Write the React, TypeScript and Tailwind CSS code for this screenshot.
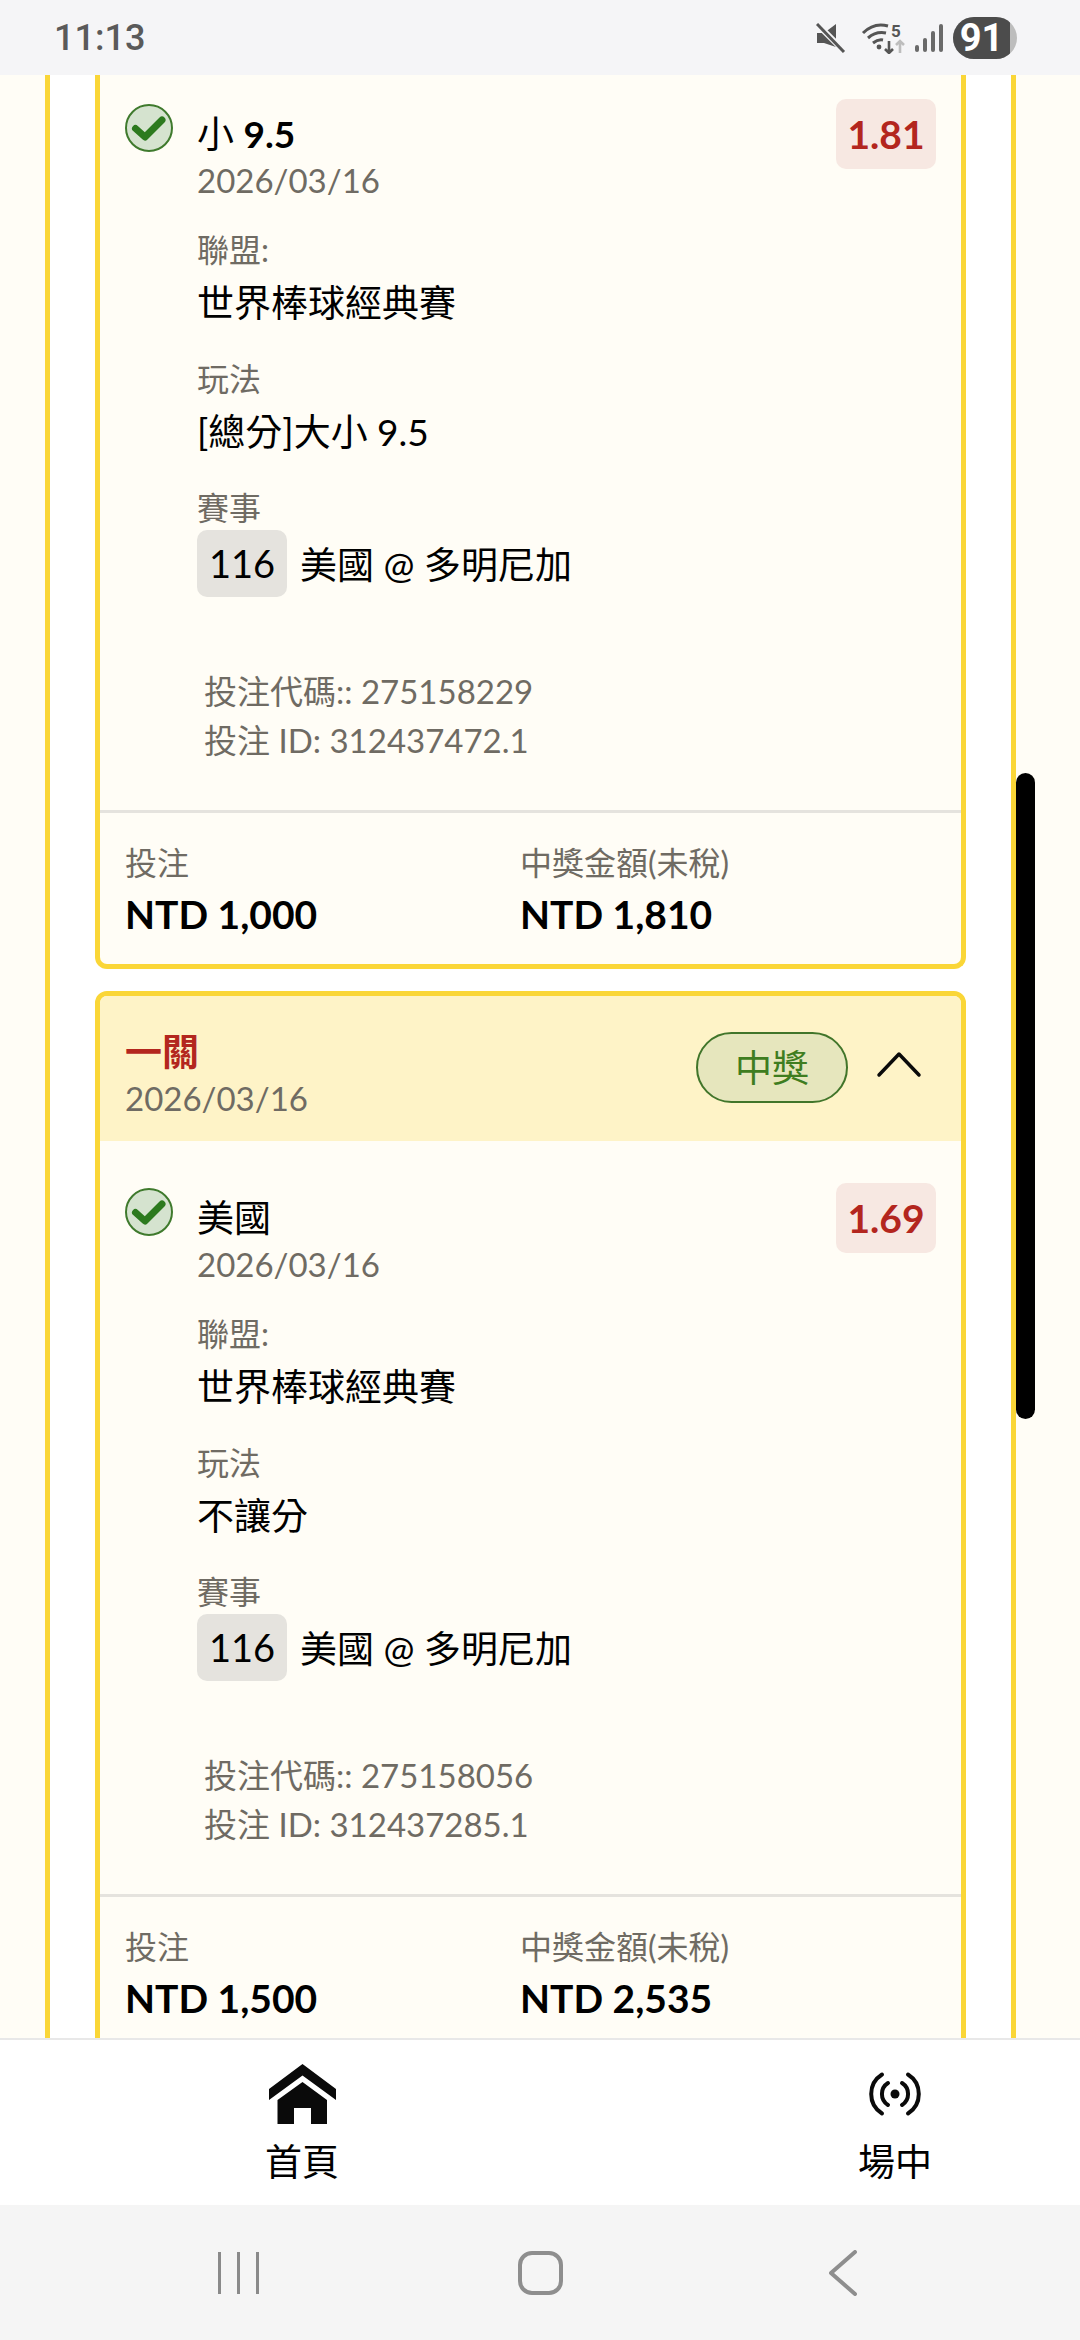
import React from 'react';

type Bet = {
  title: React.ReactNode;
  odds: string;
  market: string;
  code: string;
  betId: string;
  stake: string;
  payout: string;
};

const bets: Bet[] = [
  {
    title: <>小 <b className="font-bold">9.5</b></>,
    odds: '1.81',
    market: '[總分]大小 9.5',
    code: '275158229',
    betId: '312437472.1',
    stake: 'NTD 1,000',
    payout: 'NTD 1,810',
  },
  {
    title: '美國',
    odds: '1.69',
    market: '不讓分',
    code: '275158056',
    betId: '312437285.1',
    stake: 'NTD 1,500',
    payout: 'NTD 2,535',
  },
];

const CheckIcon = () => (
  <svg width="48" height="48" viewBox="0 0 48 48" className="mt-[5px] shrink-0">
    <circle cx="24" cy="24" r="23" fill="#d5e3cf" stroke="#3f7a2d" strokeWidth="2" />
    <path d="M10.5 24.5 L20 33 L37 16" fill="none" stroke="#2c7a1e" strokeWidth="7" strokeLinejoin="round" strokeLinecap="round" />
  </svg>
);

const BetBody = ({ bet }: { bet: Bet }) => (
  <>
    <div className="flex items-start px-[25px] pt-[42px]">
      <CheckIcon />
      <div className="ml-[24px] flex-1 pt-[11px]">
        <div className="text-[37px] leading-[48px] text-black">{bet.title}</div>
        <div className="text-[33px] leading-[44px] text-[#6f6b63]">2026/03/16</div>

        <div className="mt-[26px] text-[32px] leading-[44px] text-[#6f6b63]">聯盟:</div>
        <div className="mt-[7px] text-[37px] leading-[48px] text-black">世界棒球經典賽</div>

        <div className="mt-[30px] text-[32px] leading-[44px] text-[#6f6b63]">玩法</div>
        <div className="mt-[7px] text-[37px] leading-[48px] text-black">{bet.market}</div>

        <div className="mt-[30px] text-[32px] leading-[44px] text-[#6f6b63]">賽事</div>
        <div className="flex items-center text-[37px] text-black">
          <span className="flex h-[67px] w-[90px] items-center justify-center rounded-[10px] bg-[#e5e3de] text-[38px]">116</span>
          <span className="mt-[2px] ml-[13px]">美國 @ 多明尼加</span>
        </div>

        <div className="mt-[70px] ml-[7px] text-[33px] leading-[49px] text-[#6f6b63]">
          <div>投注代碼:: {bet.code}</div>
          <div>投注 ID: {bet.betId}</div>
        </div>
      </div>
      <div className="flex h-[70px] w-[100px] shrink-0 items-center justify-center rounded-[10px] bg-[#f7e8e2] text-[39px] font-bold text-[#b3261e]">
        {bet.odds}
      </div>
    </div>

    <div className="mt-[45px] h-[3px] bg-[#e5e3de]" />

    <div className="flex px-[25px] pt-[28px] pb-[25px]">
      <div className="w-[395px]">
        <div className="text-[32px] leading-[44px] text-[#6f6b63]">投注</div>
        <div className="mt-[4px] text-[39px] font-bold leading-[50px] text-black">{bet.stake}</div>
      </div>
      <div>
        <div className="text-[32px] leading-[44px] text-[#6f6b63]">中獎金額(未稅)</div>
        <div className="mt-[4px] text-[39px] font-bold leading-[50px] text-black">{bet.payout}</div>
      </div>
    </div>
  </>
);

const StatusBar = () => (
  <div className="flex h-[75px] shrink-0 items-center bg-[#f5f5f7] pl-[54px]">
    <span className="font-['Roboto',sans-serif] text-[36px] font-medium text-[#5a5a5a]">11:13</span>
    <div className="ml-auto flex items-center">
      <svg width="30" height="30" viewBox="0 0 30 30" className="mr-[15px]">
        <path d="M1 10 H8 L20 1 V24 L8 20 H1 Z" fill="#555" />
        <path d="M2 2 L29 29" stroke="#f5f5f7" strokeWidth="6" />
        <path d="M1 1 L28 29" stroke="#555" strokeWidth="3" />
      </svg>
      <svg width="46" height="32" viewBox="0 0 46 32" className="mr-[8px]" fill="none">
        <path d="M2 11 Q13 0 27 4" stroke="#555" strokeWidth="3" />
        <path d="M7 16 Q15 9 25 11" stroke="#555" strokeWidth="3" />
        <path d="M12 21 Q17 17 22 18" stroke="#555" strokeWidth="3" />
        <circle cx="18" cy="25" r="2.4" fill="#555" />
        <path d="M28 19 V31 M24 27 L28 31 L32 27" stroke="#555" strokeWidth="2.6" />
        <path d="M39 31 V19 M35 23 L39 19 L43 23" stroke="#bdbdbd" strokeWidth="2.6" />
        <text x="30" y="15" fontSize="17" fontWeight="700" fill="#555" fontFamily="Roboto, sans-serif">5</text>
      </svg>
      <svg width="28" height="30" viewBox="0 0 28 30" className="mr-[10px]" fill="#6a6a6a">
        <rect x="0" y="22" width="4" height="7" rx="2" />
        <rect x="8" y="15" width="4" height="14" rx="2" />
        <rect x="16" y="8" width="4" height="21" rx="2" />
        <rect x="24" y="1" width="4" height="28" rx="2" />
      </svg>
      <div className="mr-[63px] flex h-[42px] w-[64px] overflow-hidden rounded-full bg-[#bdbdbd]">
        <div className="flex w-[57px] items-center justify-center bg-[#4c4c4c] font-['Roboto',sans-serif] text-[38px] font-bold leading-none text-white">
          91
        </div>
      </div>
    </div>
  </div>
);

const BottomNav = () => (
  <div className="flex h-[167px] shrink-0 border-t-2 border-[#e8e8e8] bg-white pt-[24px] pl-[264px]">
    <div className="flex w-[76px] flex-col items-center">
      <svg width="67" height="60" viewBox="0 0 67 60" className="h-[60px] shrink-0" fill="#0a0a0a">
        <path d="M33.5 0 L67 25 V36 L33.5 11.5 L0 36 V25 Z" />
        <path fillRule="evenodd" d="M33.5 18 L58 36 V60 H42 V44 H25 V60 H8.5 V36 Z" />
      </svg>
      <span className="mt-[14px] whitespace-nowrap text-[37px] leading-[48px] text-black">首頁</span>
    </div>
    <div className="ml-[517px] flex w-[76px] flex-col items-center">
      <svg width="54" height="60" viewBox="-27 -30 54 60" className="h-[60px] shrink-0" fill="none" stroke="#0a0a0a" strokeWidth="4" strokeLinecap="round">
        <circle cx="0" cy="0" r="4.5" fill="#0a0a0a" stroke="none" />
        <path d="M-13 -19.5 A23 23 0 0 0 -13 19.5" />
        <path d="M13 -19.5 A23 23 0 0 1 13 19.5" />
        <path d="M-7 -11 A13 13 0 0 0 -7 11" />
        <path d="M7 -11 A13 13 0 0 1 7 11" />
      </svg>
      <span className="mt-[14px] whitespace-nowrap text-[37px] leading-[48px] text-black">場中</span>
    </div>
  </div>
);

const SystemNav = () => (
  <div className="flex h-[135px] shrink-0 items-center bg-[#f5f5f5]">
    <div className="ml-[218px] flex h-[42px] gap-[16px]">
      <div className="w-[3px] bg-[#8a8a8a]" />
      <div className="w-[3px] bg-[#8a8a8a]" />
      <div className="w-[3px] bg-[#8a8a8a]" />
    </div>
    <div className="ml-[259px] h-[44px] w-[45px] rounded-[14px] border-[4px] border-[#8e8e8e]" />
    <svg width="28" height="46" viewBox="0 0 28 46" className="ml-[266px]" fill="none" stroke="#8e8e8e" strokeWidth="4" strokeLinecap="round" strokeLinejoin="round">
      <path d="M26 2 L2 23 L26 44" />
    </svg>
  </div>
);

const App: React.FC = () => {
  return (
    <div className="flex h-[2340px] w-[1080px] flex-col overflow-hidden bg-[#fffdf6] font-[Lato,'Noto_Sans_CJK_TC',sans-serif]">
      <StatusBar />

      <div className="relative min-h-0 flex-1 overflow-hidden pr-[64px] pl-[45px]">
        <div className="flex h-full flex-col border-x-[5px] border-[#fad637] bg-white px-[45px]">
          <div className="-mt-[18px] shrink-0 rounded-b-[12px] border-x-[5px] border-b-[5px] border-[#fad637] bg-[#fffdf6]">
            <BetBody bet={bets[0]} />
          </div>

          <div className="mt-[22px] shrink-0 overflow-hidden rounded-[12px] border-[5px] border-[#fad637] bg-[#fffdf6]">
            <div className="flex h-[145px] items-start bg-[#fef3c7] px-[25px] pt-[32px]">
              <div>
                <div className="text-[37px] font-bold leading-[48px] text-[#b3261e]">一關</div>
                <div className="text-[33px] leading-[44px] text-[#6f6b63]">2026/03/16</div>
              </div>
              <div className="mt-[4px] ml-auto flex h-[71px] w-[152px] items-center justify-center rounded-full border-2 border-[#41752a] bg-[#e6e6bd] text-[37px] text-[#3f7d20]">
                中獎
              </div>
              <svg width="46" height="28" viewBox="0 0 46 28" className="mt-[22px] mr-[14px] ml-[28px]" fill="none" stroke="#0a0a0a" strokeWidth="3.5" strokeLinecap="round" strokeLinejoin="round">
                <path d="M3 25 L23 4 L43 25" />
              </svg>
            </div>
            <BetBody bet={bets[1]} />
          </div>
        </div>

        {/* scroll thumb over the list */}
        <div className="absolute top-[698px] left-[1016px] h-[646px] w-[19px] rounded-full bg-black" />
      </div>

      <BottomNav />
      <SystemNav />
    </div>
  );
};

export default App;
